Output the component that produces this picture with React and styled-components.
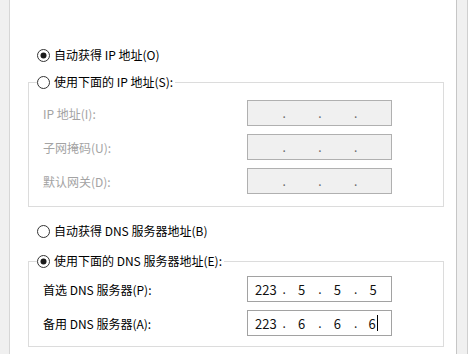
import React from "react";
import styled, { createGlobalStyle } from "styled-components";

const GlobalStyle = createGlobalStyle`
  html, body {
    margin: 0;
    padding: 0;
    background: #ffffff;
  }
  body {
    font-family: "Noto Sans CJK SC", "Noto Sans", sans-serif;
    font-size: 12px;
    color: #000;
  }
`;

const Window = styled.div`
  display: flex;
  width: 472px;
  height: 354px;
  overflow: hidden;
`;

const Gutter = styled.div`
  width: ${(p) => p.w}px;
  background: #f0f0f0;
  border-right: ${(p) => (p.edge ? "1px solid #cfcfcf" : "none")};
`;

const Panel = styled.div`
  width: 448px;
  border-left: 1px solid #d6d6d6;
  border-right: 1px solid #c6c6c6;
  background: #fff;
  padding: 47px 12px 0 18px;
  box-sizing: border-box;
  display: flex;
  flex-direction: column;
`;

const RadioRow = styled.label`
  display: flex;
  align-items: center;
  gap: 4px;
  height: 16px;
  line-height: 16px;
  white-space: nowrap;
  margin-left: ${(p) => p.indent || 0}px;
  margin-top: ${(p) => p.top || 0}px;
`;

const Group = styled.fieldset`
  margin: ${(p) => p.top || 0}px 0 0 0;
  padding: 0;
  width: 416px;
  box-sizing: border-box;
  border: 1px solid #dcdcdc;
  min-width: 0;
`;

const Legend = styled.legend`
  margin-left: 8px;
  padding: 0 2px 0 0;
  height: 16px;
`;

const Rows = styled.div`
  display: grid;
  grid-template-columns: 204px 145px;
  row-gap: 8px;
  padding: ${(p) => p.pt}px 14px ${(p) => p.pb}px 14px;
`;

const Label = styled.div`
  display: flex;
  align-items: center;
  height: 26px;
  color: ${(p) => (p.disabled ? "#a3a3a3" : "#000")};
  white-space: nowrap;
`;

const IpField = styled.div`
  position: relative;
  display: grid;
  grid-template-columns: repeat(4, 1fr);
  height: 26px;
  box-sizing: border-box;
  border: 1px solid ${(p) => (p.disabled ? "#b0b0b0" : "#a2a2a2")};
  background: ${(p) => (p.disabled ? "#f0f0f0" : "#fff")};
  font-size: 13px;
`;

const Octet = styled.div`
  position: relative;
  display: flex;
  align-items: center;
  justify-content: center;
  color: #111;
  &:not(:last-child)::after {
    content: ".";
    position: absolute;
    right: -2px;
    top: 3px;
    color: ${(p) => (p.disabled ? "#6a6a6a" : "#222")};
    font-size: 12px;
  }
`;

const Caret = styled.span`
  display: inline-block;
  width: 1px;
  height: 16px;
  background: #000;
  margin-left: 1px;
`;

function Radio({ checked }) {
  return (
    <svg width="13" height="13" viewBox="0 0 13 13">
      <circle cx="6.5" cy="6.5" r="6" fill="#fff" stroke="#333" strokeWidth="1" />
      {checked && <circle cx="6.5" cy="6.5" r="3" fill="#1a1a1a" />}
    </svg>
  );
}

function Address({ values, disabled, caret }) {
  const parts = values || ["", "", "", ""];
  return (
    <IpField disabled={disabled}>
      {parts.map((v, i) => (
        <Octet key={i} disabled={disabled}>
          {v}
          {caret && i === 3 && <Caret />}
        </Octet>
      ))}
    </IpField>
  );
}

export default function App() {
  return (
    <>
      <GlobalStyle />
      <Window>
        <Gutter w={9} />
        <Panel>
          <RadioRow indent={9}>
            <Radio checked />
            自动获得 IP 地址(O)
          </RadioRow>

          <Group top={11}>
            <Legend>
              <RadioRow>
                <Radio />
                使用下面的 IP 地址(S):
              </RadioRow>
            </Legend>
            <Rows pt={10} pb={12}>
              <Label disabled>IP 地址(I):</Label>
              <Address disabled />
              <Label disabled>子网掩码(U):</Label>
              <Address disabled />
              <Label disabled>默认网关(D):</Label>
              <Address disabled />
            </Rows>
          </Group>

          <RadioRow indent={9} top={16}>
            <Radio />
            自动获得 DNS 服务器地址(B)
          </RadioRow>

          <Group top={14}>
            <Legend>
              <RadioRow>
                <Radio checked />
                使用下面的 DNS 服务器地址(E):
              </RadioRow>
            </Legend>
            <Rows pt={7} pb={10}>
              <Label>首选 DNS 服务器(P):</Label>
              <Address values={["223", "5", "5", "5"]} />
              <Label>备用 DNS 服务器(A):</Label>
              <Address values={["223", "6", "6", "6"]} caret />
            </Rows>
          </Group>
        </Panel>
        <Gutter w={10} edge />
      </Window>
    </>
  );
}
